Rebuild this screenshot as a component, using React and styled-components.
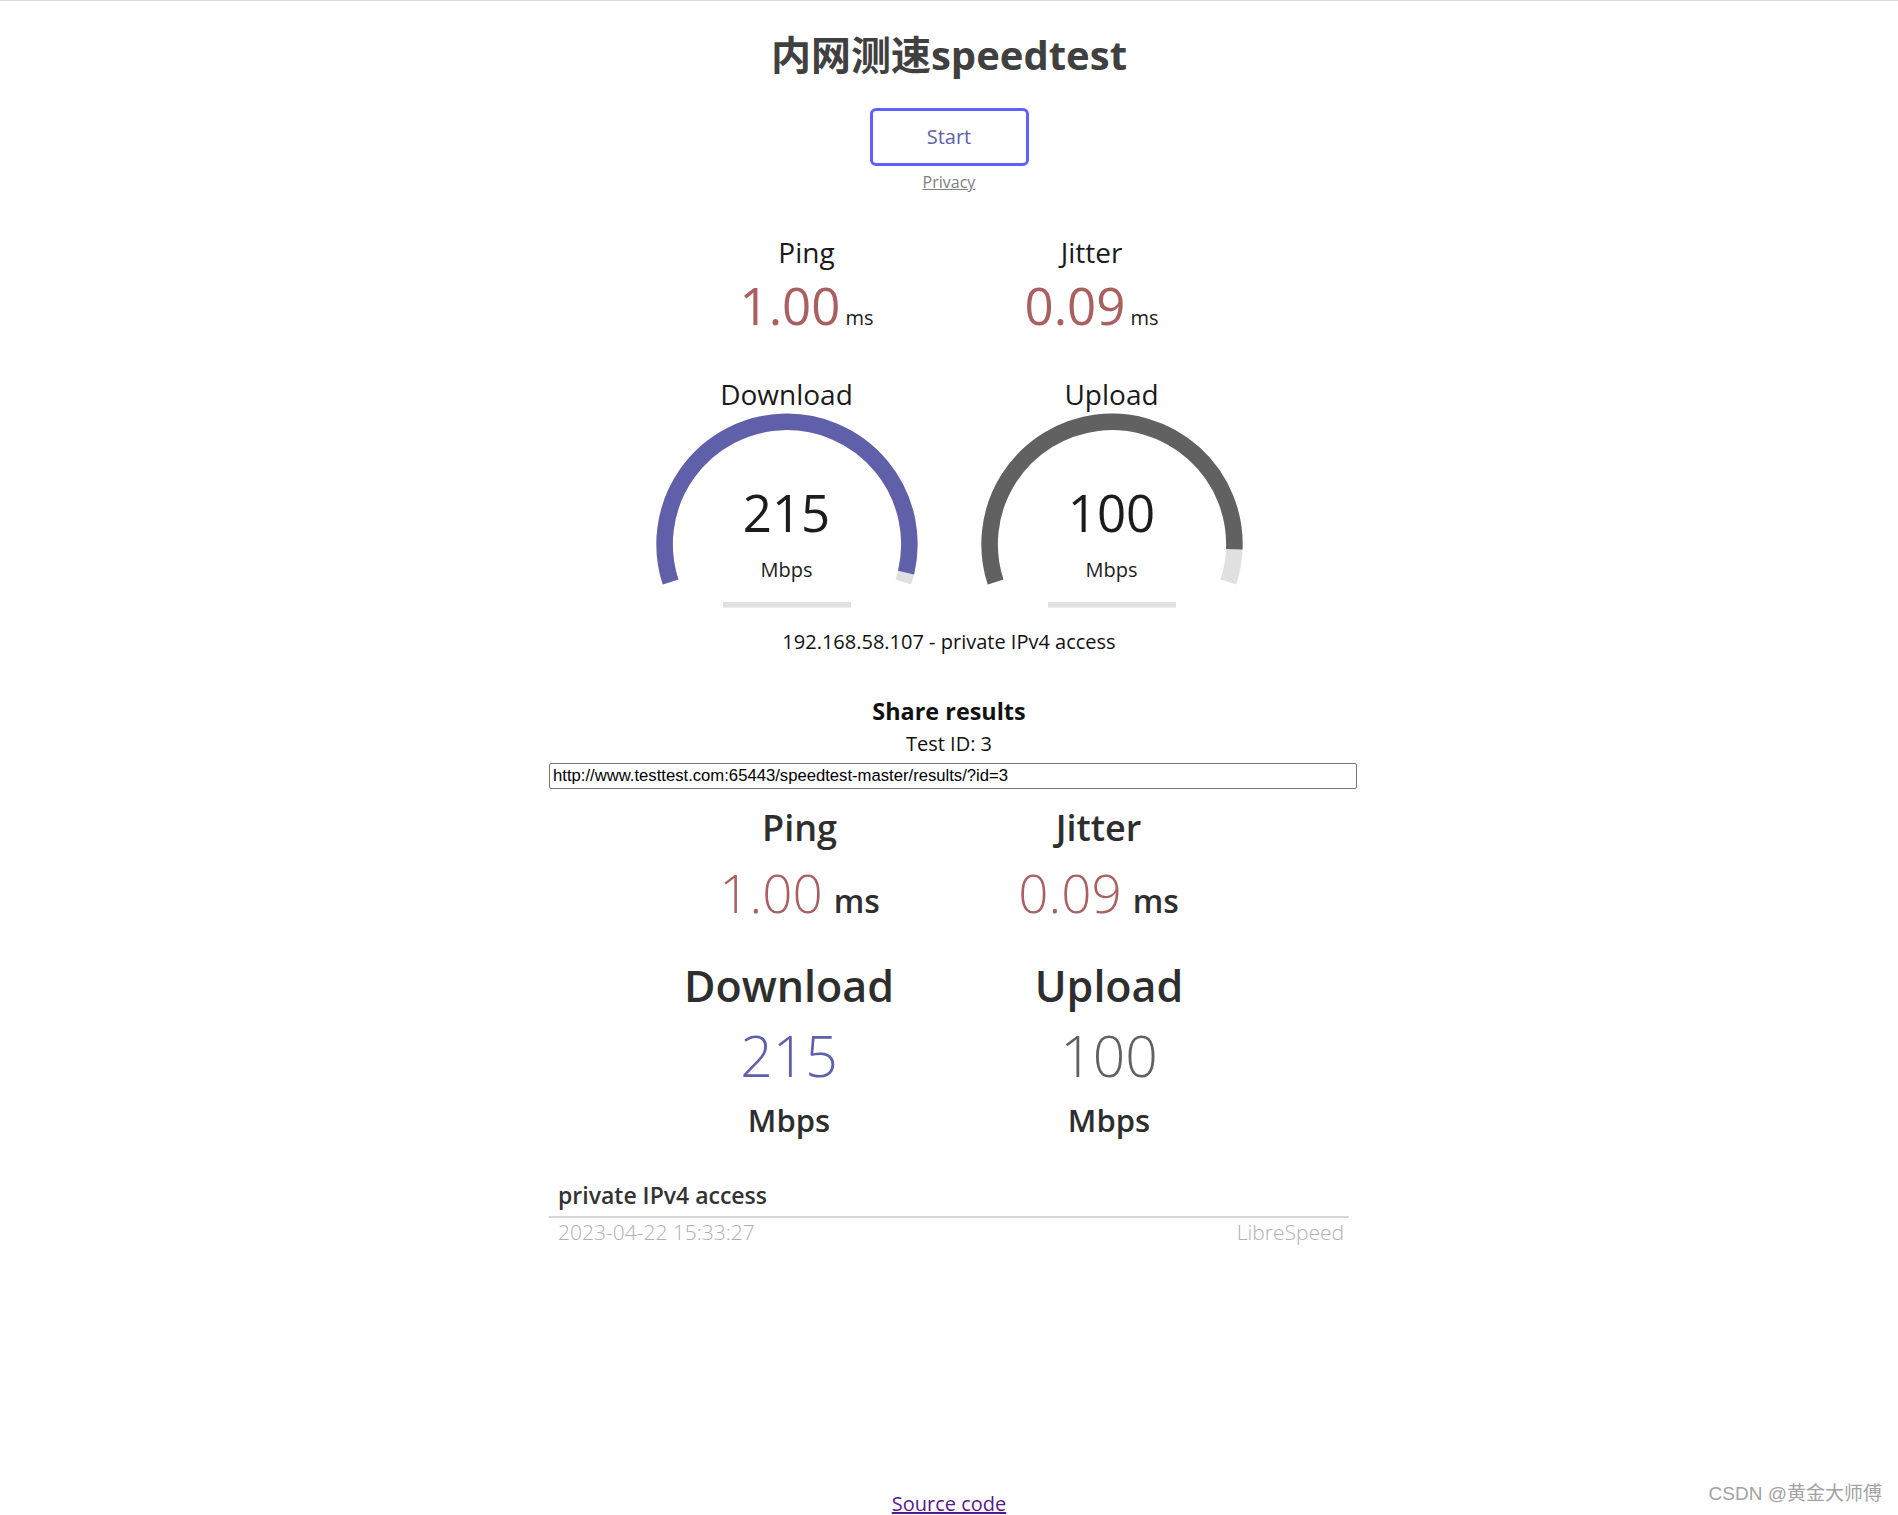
import React from "react";
import styled, { createGlobalStyle } from "styled-components";

const GlobalStyle = createGlobalStyle`
  html, body {
    margin: 0;
    padding: 0;
    background: #ffffff;
    overflow: hidden;
  }
  body {
    font-family: "Open Sans", "Noto Sans CJK SC", sans-serif;
    color: #1e1e1e;
  }
`;

const Page = styled.div`
  position: relative;
  box-sizing: border-box;
  height: 100vh;
  border-top: 1px solid #dcdcdc;
  display: flex;
  flex-direction: column;
  align-items: center;
  text-align: center;
`;

const Title = styled.h1`
  margin: 25.5px 0 0;
  font-size: 40px;
  line-height: 56px;
  font-weight: 700;
  color: #404040;
`;

const StartButton = styled.button`
  margin-top: 25.5px;
  box-sizing: border-box;
  width: 159px;
  height: 58px;
  padding: 0;
  border: 3px solid #6060ff;
  border-radius: 6px;
  background: transparent;
  color: #6060aa;
  font-family: inherit;
  font-size: 20px;
  line-height: 52px;
  cursor: pointer;
`;

const PrivacyLink = styled.a`
  margin-top: 5px;
  font-size: 16px;
  line-height: 22px;
  color: #808080;
  text-decoration: underline;
`;

const TestGroup = styled.div`
  display: flex;
  justify-content: center;
  gap: 5px;
  margin-top: ${(p) => p.$mt}px;
`;

const MetricBox = styled.div`
  width: 280px;
  height: 140px;
  display: flex;
  flex-direction: column;
  align-items: center;
`;

const MetricName = styled.div`
  font-size: 28px;
  line-height: 38px;
  color: #1a1a1a;
`;

const MetricValueRow = styled.div`
  display: flex;
  align-items: baseline;
  justify-content: center;
  gap: 5px;
`;

const MetricValue = styled.span`
  font-size: 51px;
  line-height: 68px;
  color: #aa6060;
`;

const MetricUnit = styled.span`
  font-size: 20px;
  line-height: 27px;
  color: #1a1a1a;
`;

const GaugeArea = styled.div`
  display: grid;
  width: 320px;
  height: 250px;
  & > * {
    grid-area: 1 / 1;
  }
`;

const GaugeSvg = styled.svg`
  display: block;
  width: 320px;
  height: 250px;
`;

const GaugeText = styled.div`
  position: relative;
  z-index: 1;
  display: flex;
  flex-direction: column;
  align-items: center;
`;

const GaugeName = styled.div`
  margin-top: 1px;
  font-size: 28px;
  line-height: 38px;
  color: #1a1a1a;
`;

const GaugeNumber = styled.div`
  margin-top: 68.6px;
  font-size: 51px;
  line-height: 60px;
  color: #1c1c1c;
`;

const GaugeUnit = styled.div`
  margin-top: 14px;
  font-size: 20px;
  line-height: 27px;
  color: #1c1c1c;
`;

const IpLine = styled.div`
  margin-top: 4px;
  font-size: 20px;
  line-height: 27px;
  color: #111;
`;

const ShareArea = styled.div`
  width: 800px;
  display: flex;
  flex-direction: column;
  align-items: center;
`;

const ShareTitle = styled.h3`
  margin: 39.5px 0 0;
  font-size: 23.4px;
  line-height: 32px;
  font-weight: 700;
  color: #111;
`;

const TestId = styled.p`
  margin: 3.5px 0 0;
  font-size: 20px;
  line-height: 27px;
  color: #111;
`;

const ResultsUrl = styled.input`
  align-self: flex-start;
  margin-top: 5.5px;
  box-sizing: border-box;
  width: 808px;
  height: 26px;
  padding: 0 3px;
  border: 1px solid #767676;
  border-radius: 2px;
  font-family: "Liberation Sans", Arial, sans-serif;
  font-size: 16.67px;
  color: #000;
  background: #fff;
`;

const ResultsCard = styled.div`
  align-self: stretch;
  margin-top: 5px;
  padding-top: 9.5px;
  display: flex;
  flex-direction: column;
  font-family: "Open Sans", sans-serif;
`;

const ResultRow = styled.div`
  display: flex;
  justify-content: center;
  margin-top: ${(p) => p.$mt}px;
`;

const ResultCol = styled.div`
  width: ${(p) => p.$w}px;
  display: flex;
  flex-direction: column;
  align-items: center;
`;

const ResultLabel = styled.div`
  font-size: ${(p) => p.$size}px;
  line-height: ${(p) => p.$lh}px;
  font-weight: 600;
  color: #2e2e2e;
`;

const ResultValueRow = styled.div`
  display: flex;
  align-items: baseline;
  justify-content: center;
  gap: 11px;
  margin-top: ${(p) => p.$mt}px;
`;

const ResultValue = styled.span`
  font-size: ${(p) => p.$size}px;
  line-height: ${(p) => p.$lh}px;
  font-weight: 300;
  color: ${(p) => p.$color};
  margin-top: ${(p) => p.$mt || 0}px;
`;

const ResultUnit = styled.span`
  font-size: ${(p) => p.$size}px;
  line-height: ${(p) => p.$lh}px;
  font-weight: 600;
  color: #2e2e2e;
  margin-top: ${(p) => p.$mt || 0}px;
`;

const IspLine = styled.div`
  margin-top: 39px;
  padding: 0 0 5px 9px;
  border-bottom: 2px solid #d6d6d6;
  text-align: left;
  font-size: 23px;
  line-height: 31px;
  font-weight: 600;
  color: #333;
`;

const ResultFooter = styled.div`
  display: flex;
  justify-content: space-between;
  padding: 0 5px 0 9px;
  font-size: 21px;
  line-height: 28px;
  font-weight: 300;
  color: #b0b0b0;
`;

const SourceLink = styled.a`
  margin-top: auto;
  font-size: 20px;
  line-height: 23px;
  color: #551a8b;
  text-decoration: underline;
`;

const Watermark = styled.div`
  position: absolute;
  right: 16px;
  bottom: 9px;
  font-family: "Liberation Sans", "Noto Sans CJK SC", sans-serif;
  font-size: 19px;
  line-height: 24px;
  color: #a2a2a2;
`;

const W = 320;
const H = 250;
const SZ = H * 0.0055;
const LW = 12 * SZ;
const CX = W / 2;
const CY = H - 58 * SZ;
const R = H / 1.8 - LW;

function arcPath(a0, a1) {
  const x0 = CX + R * Math.cos(a0);
  const y0 = CY + R * Math.sin(a0);
  const x1 = CX + R * Math.cos(a1);
  const y1 = CY + R * Math.sin(a1);
  const large = a1 - a0 > Math.PI ? 1 : 0;
  return `M${x0} ${y0} A${R} ${R} 0 ${large} 1 ${x1} ${y1}`;
}

function mbpsToAmount(s) {
  return 1 - 1 / Math.pow(1.3, Math.sqrt(s));
}

function Gauge({ name, value, color }) {
  const start = -Math.PI * 1.1;
  const end = Math.PI * 0.1;
  const amount = mbpsToAmount(value);
  const cur = amount * Math.PI * 1.2 - Math.PI * 1.1;
  return (
    <GaugeArea>
      <GaugeSvg viewBox={`0 0 ${W} ${H}`}>
        <path d={arcPath(start, end)} fill="none" stroke="#e0e0e0" strokeWidth={LW} />
        <path d={arcPath(start, cur)} fill="none" stroke={color} strokeWidth={LW} />
        <rect x={W * 0.3} y={H - 16 * SZ} width={W * 0.4} height={4 * SZ} fill="#e0e0e0" />
      </GaugeSvg>
      <GaugeText>
        <GaugeName>{name}</GaugeName>
        <GaugeNumber>{value}</GaugeNumber>
        <GaugeUnit>Mbps</GaugeUnit>
      </GaugeText>
    </GaugeArea>
  );
}

function Metric({ name, value }) {
  return (
    <MetricBox>
      <MetricName>{name}</MetricName>
      <MetricValueRow>
        <MetricValue>{value}</MetricValue>
        <MetricUnit>ms</MetricUnit>
      </MetricValueRow>
    </MetricBox>
  );
}

function ResultLatency({ name, value }) {
  return (
    <ResultCol $w={299}>
      <ResultLabel $size={36} $lh={49}>{name}</ResultLabel>
      <ResultValueRow $mt={4.6}>
        <ResultValue $size={53} $lh={72} $color="#aa6060">{value}</ResultValue>
        <ResultUnit $size={32} $lh={44}>ms</ResultUnit>
      </ResultValueRow>
    </ResultCol>
  );
}

function ResultSpeed({ name, value, color }) {
  return (
    <ResultCol $w={320}>
      <ResultLabel $size={43} $lh={58}>{name}</ResultLabel>
      <ResultValue $size={57} $lh={78} $color={color} $mt={1.2}>{value}</ResultValue>
      <ResultUnit $size={31} $lh={42} $mt={4.5}>Mbps</ResultUnit>
    </ResultCol>
  );
}

export default function App() {
  return (
    <>
      <GlobalStyle />
      <Page>
        <Title>内网测速speedtest</Title>
        <StartButton type="button">Start</StartButton>
        <PrivacyLink href="#">Privacy</PrivacyLink>

        <TestGroup $mt={40}>
          <Metric name="Ping" value="1.00" />
          <Metric name="Jitter" value="0.09" />
        </TestGroup>

        <TestGroup $mt={1}>
          <Gauge name="Download" value={215} color="#6060aa" />
          <Gauge name="Upload" value={100} color="#616161" />
        </TestGroup>

        <IpLine>192.168.58.107 - private IPv4 access</IpLine>

        <ShareArea>
          <ShareTitle>Share results</ShareTitle>
          <TestId>Test ID: 3</TestId>
          <ResultsUrl
            type="text"
            readOnly
            value="http://www.testtest.com:65443/speedtest-master/results/?id=3"
          />
          <ResultsCard>
            <ResultRow $mt={0}>
              <ResultLatency name="Ping" value="1.00" />
              <ResultLatency name="Jitter" value="0.09" />
            </ResultRow>
            <ResultRow $mt={28.4}>
              <ResultSpeed name="Download" value="215" color="#6060aa" />
              <ResultSpeed name="Upload" value="100" color="#616161" />
            </ResultRow>
            <IspLine>private IPv4 access</IspLine>
            <ResultFooter>
              <span>2023-04-22 15:33:27</span>
              <span>LibreSpeed</span>
            </ResultFooter>
          </ResultsCard>
        </ShareArea>

        <SourceLink href="#">Source code</SourceLink>
        <Watermark>CSDN @黄金大师傅</Watermark>
      </Page>
    </>
  );
}
